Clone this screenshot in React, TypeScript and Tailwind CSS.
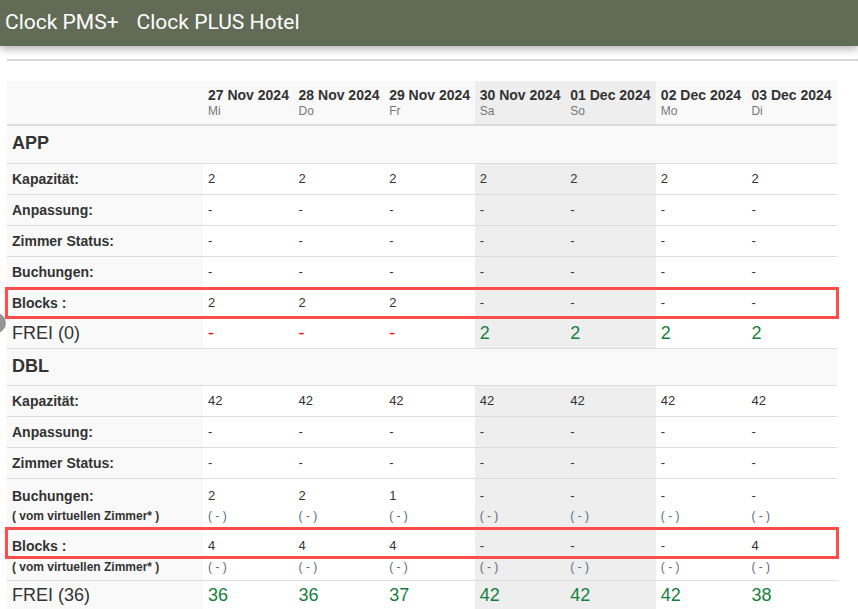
import React from 'react';

type Cell = string | number;

interface DataRow {
  label: string;
  values: Cell[];
  sub?: boolean;
  height: string;
}

const dates = [
  { date: '27 Nov 2024', day: 'Mi' },
  { date: '28 Nov 2024', day: 'Do' },
  { date: '29 Nov 2024', day: 'Fr' },
  { date: '30 Nov 2024', day: 'Sa' },
  { date: '01 Dec 2024', day: 'So' },
  { date: '02 Dec 2024', day: 'Mo' },
  { date: '03 Dec 2024', day: 'Di' },
];

const weekend = [3, 4];

const sections: { name: string; rows: DataRow[]; frei: Cell[]; freiLabel: string }[] = [
  {
    name: 'APP',
    rows: [
      { label: 'Kapazität:', values: [2, 2, 2, 2, 2, 2, 2], height: 'h-[31px]' },
      { label: 'Anpassung:', values: ['-', '-', '-', '-', '-', '-', '-'], height: 'h-[31px]' },
      { label: 'Zimmer Status:', values: ['-', '-', '-', '-', '-', '-', '-'], height: 'h-[31px]' },
      { label: 'Buchungen:', values: ['-', '-', '-', '-', '-', '-', '-'], height: 'h-[31px]' },
      { label: 'Blocks :', values: [2, 2, 2, '-', '-', '-', '-'], height: 'h-[31px]' },
    ],
    freiLabel: 'FREI (0)',
    frei: ['-', '-', '-', 2, 2, 2, 2],
  },
  {
    name: 'DBL',
    rows: [
      { label: 'Kapazität:', values: [42, 42, 42, 42, 42, 42, 42], height: 'h-[31px]' },
      { label: 'Anpassung:', values: ['-', '-', '-', '-', '-', '-', '-'], height: 'h-[31px]' },
      { label: 'Zimmer Status:', values: ['-', '-', '-', '-', '-', '-', '-'], height: 'h-[31px]' },
      { label: 'Buchungen:', values: [2, 2, 1, '-', '-', '-', '-'], sub: true, height: 'h-[49px]' },
      { label: 'Blocks :', values: [4, 4, 4, '-', '-', '-', 4], sub: true, height: 'h-[53px]' },
    ],
    freiLabel: 'FREI (36)',
    frei: [36, 36, 37, 42, 42, 42, 38],
  },
];

const grid = 'grid grid-cols-[196px_repeat(7,minmax(0,1fr))]';

function cellBg(i: number) {
  return weekend.includes(i) ? 'bg-[#eeeeee]' : 'bg-white';
}

function Row({ row }: { row: DataRow }) {
  const isBlocks = row.label === 'Blocks :';
  const top = isBlocks && row.sub ? 'pt-[8px]' : 'pt-[7px]';
  const gap = isBlocks ? 'mt-[3px]' : 'mt-[2px]';
  if (row.sub) {
    return (
      <div className={`${grid} ${row.height} border-t border-[#dddddd]`}>
        <div className={`bg-[#f9f9f9] pl-[5px] ${top}`}>
          <div className="text-[14px] font-bold leading-[20px]">{row.label}</div>
          <div className={`text-[12px] font-bold leading-[16px] whitespace-nowrap ${gap}`}>( vom virtuellen Zimmer* )</div>
        </div>
        {row.values.map((v, i) => (
          <div key={i} className={`${cellBg(i)} pl-[5px] ${top}`}>
            <div className="text-[13px] leading-[20px]">{v}</div>
            <div className={`text-[12px] leading-[16px] text-[#5b6b7b] ${gap}`}>( - )</div>
          </div>
        ))}
      </div>
    );
  }
  return (
    <div className={`${grid} ${row.height} border-t border-[#dddddd]`}>
      <div className="bg-[#f9f9f9] pl-[5px] flex items-center text-[14px] font-bold">{row.label}</div>
      {row.values.map((v, i) => (
        <div key={i} className={`${cellBg(i)} pl-[5px] flex items-center text-[13px]`}>
          {v}
        </div>
      ))}
    </div>
  );
}

export default function App() {
  return (
    <div className="relative min-h-[609px] bg-white text-[#333333] font-['Liberation_Sans',Arial,sans-serif] overflow-hidden">
      {/* top bar */}
      <div className="relative z-10 h-[46px] bg-[#616b56] shadow-[0_3px_8px_rgba(0,0,0,0.3)] flex items-center pl-[5px] pb-[1px] text-white text-[21px] font-['Roboto',sans-serif]">
        <span>Clock PMS+</span>
        <span className="ml-[18px]">Clock PLUS Hotel</span>
      </div>

      <div className="pl-[7px] pt-[13px]">
        <div className="h-[2px] bg-[#d6d6d6]" />

        <div className="relative mt-[20px] w-[830px]">
          {/* date header */}
          <div className={`${grid} h-[45px] border-b-2 border-[#dddddd]`}>
            <div className="bg-[#f9f9f9]" />
            {dates.map((d, i) => (
              <div key={d.date} className={`${weekend.includes(i) ? 'bg-[#eeeeee]' : 'bg-[#f9f9f9]'} pl-[5px] pt-[6px]`}>
                <div className="text-[14px] font-bold leading-[17px] whitespace-nowrap">{d.date}</div>
                <div className="text-[12px] leading-[15px] text-[#777777]">{d.day}</div>
              </div>
            ))}
          </div>

          {sections.map((s, si) => (
            <div key={s.name}>
              <div
                className={`${si === 0 ? 'h-[37px]' : 'h-[37px] border-t border-[#dddddd]'} bg-[#f9f9f9] pl-[5px] flex items-center pb-[2px] text-[18px] font-bold`}
              >
                {s.name}
              </div>
              {s.rows.map((r) => (
                <Row key={r.label} row={r} />
              ))}
              <div className={`${grid} h-[30px] border-t border-[#dddddd]`}>
                <div className="bg-[#f9f9f9] pl-[5px] flex items-center text-[18px]">{s.freiLabel}</div>
                {s.frei.map((v, i) => (
                  <div
                    key={i}
                    className={`${cellBg(i)} pl-[5px] flex items-center text-[18px] ${v === '-' ? 'text-[#ff0000]' : 'text-[#15803d]'}`}
                  >
                    {v}
                  </div>
                ))}
              </div>
            </div>
          ))}

          {/* highlight boxes */}
          <div className="absolute left-[-2px] top-[206px] w-[834px] h-[32px] border-[3px] border-[#ff4d4d] pointer-events-none" />
          <div className="absolute left-[-2px] top-[446px] w-[834px] h-[32px] border-[3px] border-[#ff4d4d] pointer-events-none" />
        </div>
      </div>

      {/* floating handle at the left edge */}
      <div className="absolute left-[-14px] top-[313px] w-[20px] h-[20px] rounded-full bg-[#8a8a8a] opacity-90" />
    </div>
  );
}
